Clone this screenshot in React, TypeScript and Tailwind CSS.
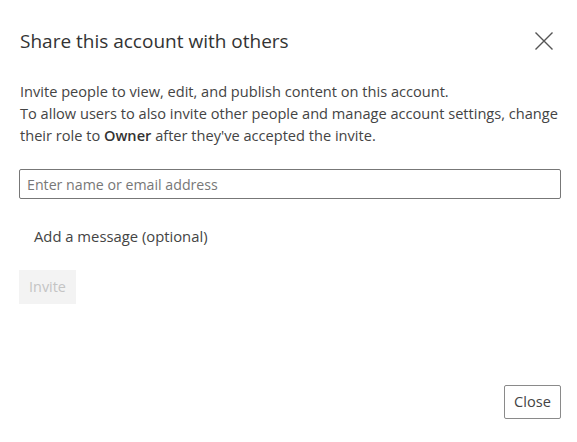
export default function App() {
  return (
    <div
      className="w-[577px] h-[442px] bg-white text-[#333] flex flex-col"
      style={{ fontFamily: '"Open Sans", "Noto Sans", sans-serif' }}
    >
      {/* Header */}
      <div className="flex items-center justify-between pl-5 pr-[24px] pt-[29px]">
        <h2 className="text-[19px] leading-[24px] text-[#333]">Share this account with others</h2>
        <button className="w-[18px] h-[18px] text-[#555]">
          <svg viewBox="0 0 18 18" className="w-[18px] h-[18px]" fill="none" stroke="currentColor" strokeWidth="1.4">
            <path d="M0.5 0.5L17.5 17.5M17.5 0.5L0.5 17.5" />
          </svg>
        </button>
      </div>

      {/* Body */}
      <div className="pl-5 pr-[14px] pt-[27px] text-[14.6px] leading-[22px] text-[#444]">
        <p>Invite people to view, edit, and publish content on this account.</p>
        <p>
          To allow users to also invite other people and manage account settings, change their role to{" "}
          <span className="font-semibold text-[#333]">Owner</span> after they've accepted the invite.
        </p>
      </div>

      <div className="pl-[19px] pr-4 pt-[23px]">
        <input
          type="text"
          placeholder="Enter name or email address"
          className="w-[542px] h-[30px] border border-[#777] rounded-[2px] px-[7px] text-[14.2px] placeholder-[#777] outline-none"
        />
      </div>

      <div className="pl-[34px] pt-[27px] text-[14.8px] text-[#444] leading-[20px]">
        Add a message (optional)
      </div>

      <div className="pl-[19px] pt-[24px]">
        <button className="w-[57px] h-[34px] bg-[#f3f3f3] text-[#c4c4c4] text-[14.4px]">Invite</button>
      </div>

      <div className="flex-1" />

      <div className="flex justify-end pr-4 pb-[23px]">
        <button className="w-[57px] h-[34px] border border-[#8a8a8a] rounded-[2px] text-[#444] text-[14.6px]">
          Close
        </button>
      </div>
    </div>
  );
}
